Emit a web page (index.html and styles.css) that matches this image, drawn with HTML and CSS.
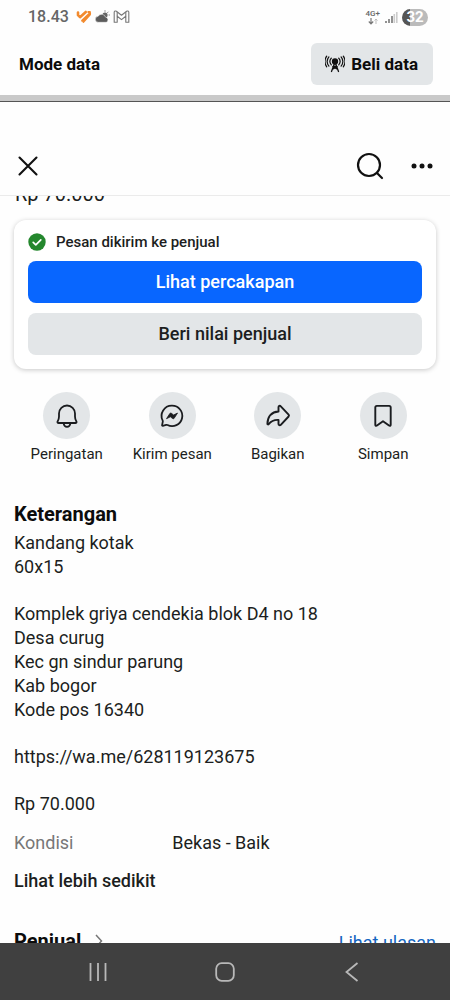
FILE: index.html
```html
<!DOCTYPE html>
<html lang="id">
<head>
<meta charset="utf-8">
<meta name="viewport" content="width=device-width, initial-scale=1">
<title>Marketplace</title>
<link rel="stylesheet" href="styles.css">
</head>
<body>
<div class="screen">
  <div class="status">
    <span class="status-time">18.43</span>
    <svg class="status-heart" width="16" height="14" viewBox="0 0 16 14" fill="none" stroke="#f28a2e" stroke-width="2.600" stroke-linecap="round" stroke-linejoin="round"><path d="M2 2.600v2.600l2 2 5.800-5.200"/><path d="m6.400 10.600 7.400-7"/><path d="M12.200 2h1.800v2.600L7.500 12" stroke-width="1.800"/></svg>
    <svg class="status-cloud" width="15" height="14" viewBox="0 0 15 14"><circle cx="10" cy="5" r="2.600" fill="#666"/><path d="M10 .4v1.200M13.400 1.800l-.9.900M14.700 5h-1" stroke="#666" stroke-width="1"/><path d="M3.500 12.300a3 3 0 0 1-.3-6 4 4 0 0 1 7.300.8 2.700 2.700 0 0 1 .8 5.200z" fill="#5c5c5c" stroke="#fff" stroke-width=".5"/></svg>
    <svg class="status-mail" width="17" height="14" viewBox="0 0 17 14" fill="none" stroke="#777" stroke-width="1.100" stroke-linejoin="round"><path d="M1.200 12.300V2.200c0-1.200 1.300-1.600 2.200-.9l5.100 4 5.100-4c.9-.7 2.200-.3 2.200.9v10.100h-3V6.200L8.500 9.600 4.200 6.200v6.100z"/><path d="M4.200 6.200V2M12.800 6.200V2"/></svg>
    <span class="status-net"><span>4G+</span><svg width="12" height="7" viewBox="0 0 12 7" fill="none" stroke="#777" stroke-width="1.200"><path d="M4 0v5.500M1.800 3.500 4 5.800l2.200-2.300"/><path d="M9 6V1M7.500 2.500 9 1l1.500 1.500" stroke="#bbb" stroke-width="1"/></svg></span>
    <svg class="status-signal" width="13" height="13" viewBox="0 0 13 13"><path d="M1 12v-2M4 12V8M7 12V5" stroke="#777" stroke-width="1.600"/><path d="M9.300 12V3M11.800 12V1" stroke="#ccc" stroke-width="1.600"/></svg>
    <span class="battery">32</span>
  </div>

  <div class="mode">
    <span class="mode-title">Mode data</span>
    <button class="buy" type="button">
      <svg width="20" height="20" viewBox="0 0 20 20" fill="none" stroke="#111" stroke-width="1.500" stroke-linecap="round"><circle cx="10" cy="7.500" r="2.400" fill="#111"/><path d="M10 8 6.500 17.500M10 8l3.500 9.500M8.500 12.500h3M7.500 15.200l4.800-2.500M12.500 15.200 7.700 12.700" stroke-width="1.300"/><path d="M6.300 4.200a5 5 0 0 0 0 6.600M13.700 4.200a5 5 0 0 1 0 6.600M3.900 2.900a7.500 7.500 0 0 0 0 9.200M16.100 2.900a7.500 7.500 0 0 1 0 9.200M1.700 2.200a9.500 9.500 0 0 0 0 10.600M18.300 2.200a9.500 9.500 0 0 1 0 10.600" stroke-width="1.200"/></svg>
      Beli data
    </button>
  </div>

  <header class="bar">
    <button class="icon-button" type="button" aria-label="Tutup"><svg width="24" height="24" viewBox="0 0 24 24" fill="none" stroke="#111" stroke-width="2.100" stroke-linecap="round"><path d="m3.500 3.500 17 17M20.500 3.500l-17 17"/></svg></button>
    <button class="icon-button bar-search" type="button" aria-label="Cari"><svg width="28" height="28" viewBox="0 0 28 28" fill="none" stroke="#111" stroke-width="2.200" stroke-linecap="round"><circle cx="13" cy="13" r="11"/><path d="m21 21 5 5"/></svg></button>
    <button class="icon-button" type="button" aria-label="Lainnya"><svg width="24" height="24" viewBox="0 0 24 24" fill="#111"><circle cx="4" cy="12" r="2.500"/><circle cx="12" cy="12" r="2.500"/><circle cx="20" cy="12" r="2.500"/></svg></button>
  </header>

  <main class="content">
    <p class="price">Rp 70.000</p>

    <section class="card">
      <p class="sent"><svg width="18" height="18" viewBox="0 0 18 18" fill="none"><circle cx="9" cy="9" r="8.700" fill="#24872d"/><path d="m5.200 9.400 2.600 2.500 5-5.100" stroke="#fff" stroke-width="1.700" stroke-linecap="round" stroke-linejoin="round"/></svg>Pesan dikirim ke penjual</p>
      <button class="wide primary" type="button">Lihat percakapan</button>
      <button class="wide" type="button">Beri nilai penjual</button>
    </section>

    <div class="actions">
      <button class="action" type="button"><span class="disc"><svg width="26" height="26" viewBox="0 0 26 26" fill="none" stroke="#1a1c1f" stroke-width="1.800" stroke-linejoin="round"><path d="M4.600 20c-1.100 0-1.400-.7-1-1.500.9-1.500 1.400-3 1.400-5V10.500a8 8 0 0 1 16 0v3c0 2 .5 3.500 1.400 5 .4.800.1 1.500-1 1.500z"/><path d="M9.700 20.500a3.300 3.300 0 0 0 6.600 0"/></svg></span>Peringatan</button>
      <button class="action" type="button"><span class="disc"><svg width="26" height="26" viewBox="0 0 26 26" fill="none" stroke="#1a1c1f" stroke-width="1.800" stroke-linejoin="round"><path d="M13 2.700A10.200 10.200 0 1 1 8.500 22c-.5-.2-.9-.2-1.400-.1l-3.300.9c-.5.100-.8-.2-.7-.7l.7-3.500c.1-.4 0-.8-.2-1.200A10.200 10.200 0 0 1 13 2.700z"/><path d="m7.500 15.700 3.300-5.100c.4-.6 1-.7 1.600-.3l2.200 1.700 3.900-1.900-3.300 5.100c-.4.600-1 .7-1.600.3l-2.200-1.700z" fill="#1a1c1f" stroke-width=".8"/></svg></span>Kirim pesan</button>
      <button class="action" type="button"><span class="disc"><svg width="26" height="26" viewBox="0 0 26 26" fill="none" stroke="#1a1c1f" stroke-width="1.900" stroke-linejoin="round"><path d="M13.500 8.500V4.200c0-1.300 1.400-1.800 2.300-.9l7.800 8.300c.5.600.5 1.300 0 1.900l-7.800 8.300c-.9.900-2.300.4-2.300-.9v-4c-4.500-.3-7.200.9-9.800 4.200-.5.600-1.400.4-1.300-.5C2.800 13.700 6.300 9 13.500 8.500z"/></svg></span>Bagikan</button>
      <button class="action" type="button"><span class="disc"><svg width="26" height="26" viewBox="0 0 26 26" fill="none" stroke="#1a1c1f" stroke-width="1.900" stroke-linejoin="round"><path d="M5.300 4.500c0-1 .6-1.600 1.600-1.600h12.200c1 0 1.600.6 1.600 1.600v17.300c0 1-.9 1.400-1.700.8L13 18.300l-6 4.300c-.8.600-1.700.2-1.700-.8z"/></svg></span>Simpan</button>
    </div>

    <section class="details">
      <h2 class="heading">Keterangan</h2>
      <p class="text">Kandang kotak<br>60x15</p>
      <p class="text">Komplek griya cendekia blok D4 no 18<br>Desa curug<br>Kec gn sindur parung<br>Kab bogor<br>Kode pos 16340</p>
      <p class="text">https://wa.me/628119123675</p>
      <p class="text">Rp 70.000</p>
      <dl class="spec"><dt>Kondisi</dt><dd>Bekas - Baik</dd></dl>
      <button class="less" type="button">Lihat lebih sedikit</button>
    </section>

    <section class="seller">
      <h2 class="heading">Penjual</h2>
      <svg width="8" height="14" viewBox="0 0 8 14" fill="none" stroke="#777" stroke-width="1.500"><path d="m1 1 5.500 6L1 13"/></svg>
      <a class="reviews" href="#ulasan">Lihat ulasan</a>
    </section>
  </main>

  <nav class="system">
    <button class="icon-button" type="button" aria-label="Aplikasi terbaru"><svg width="20" height="20" viewBox="0 0 20 20" stroke="#b8b8b8" stroke-width="1.800"><path d="M2.500 1v18M10 1v18M17.500 1v18"/></svg></button>
    <button class="icon-button" type="button" aria-label="Beranda"><svg width="20" height="20" viewBox="0 0 20 20" fill="none" stroke="#b8b8b8" stroke-width="1.800"><rect x="1.200" y="1.200" width="17.600" height="17.600" rx="5.500"/></svg></button>
    <button class="icon-button" type="button" aria-label="Kembali"><svg width="20" height="20" viewBox="0 0 20 20" fill="none" stroke="#b8b8b8" stroke-width="1.800"><path d="M15.500 1 4.500 10l11 9"/></svg></button>
  </nav>
</div>
</body>
</html>
```
FILE: styles.css
```css
* {
  box-sizing: border-box;
}

body,
p,
h2,
dl,
dd {
  margin: 0;
}

body {
  font-family: Roboto, "Liberation Sans", sans-serif;
  font-size: 18px;
  line-height: 24px;
  color: #1c1e21;
  background: #fefefe;
}

button {
  padding: 0;
  border: 0;
  background: none;
  font: inherit;
  color: inherit;
  cursor: pointer;
}

svg {
  display: block;
  flex: none;
}

.screen {
  display: flex;
  flex-direction: column;
  height: 100vh;
}

.status {
  display: flex;
  align-items: center;
  height: 34px;
  padding: 0 22px 0 28px;
  color: #666;
}

.status-time {
  font-size: 16px;
  font-weight: 500;
}

.status-heart {
  margin-left: 7px;
}

.status-cloud,
.status-mail {
  margin-left: 3px;
}

.status-net {
  display: flex;
  flex-direction: column;
  align-items: center;
  margin-left: auto;
  font-size: 8px;
  font-weight: 500;
  line-height: 8px;
}

.status-signal {
  margin: 0 4px 0 5px;
}

.battery {
  width: 26px;
  border-radius: 9px;
  background: linear-gradient(90deg, #555 8px, #bbb 8px);
  color: #fff;
  font-size: 15px;
  font-weight: 700;
  line-height: 17px;
  text-align: center;
}

.mode {
  display: flex;
  align-items: center;
  justify-content: space-between;
  height: 68px;
  padding: 0 17px 7px 19px;
  border-bottom: 1px solid #555;
  background: linear-gradient(0deg, #c9c9c9 6px, #fefefe 6px);
  color: #0c0c0c;
}

.mode-title {
  font-size: 17px;
  font-weight: 700;
}

.buy {
  display: flex;
  align-items: center;
  gap: 6px;
  height: 42px;
  padding: 0 15px 0 14px;
  border-radius: 6px;
  background: #e3e6e8;
  font-size: 17px;
  font-weight: 700;
}

.bar {
  display: flex;
  align-items: center;
  height: 94px;
  padding: 34px 16px 0;
  border-bottom: 1px solid #ebebeb;
}

.bar-search {
  margin: 0 26px 0 auto;
}

.content {
  flex: 1;
  min-height: 0;
  overflow: hidden;
}

.price {
  height: 24px;
  margin-top: -2px;
  margin-bottom: 2px;
  padding-left: 15px;
  font-size: 20px;
  line-height: 0;
}

.card {
  display: flex;
  flex-direction: column;
  gap: 10px;
  margin: 0 14px;
  padding: 13px 14px 14px;
  border-radius: 12px;
  background: #fff;
  box-shadow: 0 1px 5px rgba(0, 0, 0, 0.22);
}

.sent {
  display: flex;
  align-items: center;
  gap: 10px;
  font-size: 15px;
  font-weight: 500;
  line-height: 18px;
}

.wide {
  height: 42px;
  border-radius: 8px;
  background: #e3e6e8;
  font-weight: 500;
}

.primary {
  background: #0866ff;
  color: #fff;
}

.actions {
  display: grid;
  grid-template-columns: repeat(4, 1fr);
  margin: 23px 14px 0;
}

.action {
  display: flex;
  flex-direction: column;
  align-items: center;
  gap: 5px;
  font-size: 15px;
  line-height: 20px;
}

.disc {
  display: grid;
  place-items: center;
  width: 47px;
  height: 47px;
  border-radius: 50%;
  background: #e3e6e8;
}

.details {
  padding: 38px 14px 0;
}

.heading {
  color: #0c0c0c;
  font-size: 20px;
  font-weight: 700;
  line-height: 24px;
}

.text {
  margin-bottom: 23px;
}

.heading + .text {
  margin-top: 5px;
}

.spec {
  display: grid;
  grid-template-columns: 3fr 5fr;
  margin-top: -8px;
}

.spec dt {
  color: #777;
}

.less {
  display: block;
  margin-top: 14px;
  font-weight: 500;
}

.seller {
  display: flex;
  align-items: center;
  gap: 14px;
  padding: 34px 14px 0;
}

.reviews {
  margin-left: auto;
  padding-top: 4px;
  color: #1465c0;
  text-decoration: none;
}

.system {
  display: flex;
  align-items: center;
  justify-content: space-around;
  height: 57px;
  padding: 0 35px;
  background: #404040;
}
```
